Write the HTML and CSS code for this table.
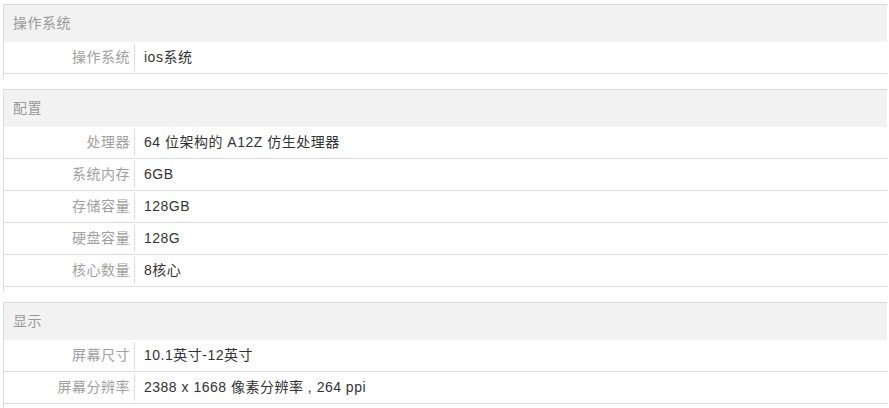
FILE: index.html
```html
<!DOCTYPE html>
<html>
    <head>
        <title>参数</title>
        <link rel="stylesheet" href="styles.css">
    </head>
    <body>
        <div class="spec">
            <div class="spec-head">操作系统</div>
            <div class="spec-row"><div class="spec-label">操作系统</div><div class="spec-value">ios系统</div></div>
        </div>

        <div class="spec">
            <div class="spec-head">配置</div>
            <div class="spec-row"><div class="spec-label">处理器</div><div class="spec-value">64 位架构的 A12Z 仿生处理器</div></div>
            <div class="spec-row"><div class="spec-label">系统内存</div><div class="spec-value">6GB</div></div>
            <div class="spec-row"><div class="spec-label">存储容量</div><div class="spec-value">128GB</div></div>
            <div class="spec-row"><div class="spec-label">硬盘容量</div><div class="spec-value">128G</div></div>
            <div class="spec-row"><div class="spec-label">核心数量</div><div class="spec-value">8核心</div></div>
        </div>

        <div class="spec">
            <div class="spec-head">显示</div>
            <div class="spec-row"><div class="spec-label">屏幕尺寸</div><div class="spec-value">10.1英寸-12英寸</div></div>
            <div class="spec-row"><div class="spec-label">屏幕分辨率</div><div class="spec-value">2388 x 1668 像素分辨率 , 264 ppi</div></div>
        </div>
    </body>
</html>
```

FILE: styles.css
```css
* {
    box-sizing: border-box;
    margin: 0;
    padding: 0;
}

body {
    background: #ffffff;
    padding: 4px 2px 0 3px;
    font-family: 'Liberation Sans', 'Noto Sans CJK SC', sans-serif;
    font-size: 14px;
    letter-spacing: 0.5px;
}

.spec {
    border-top: 1px solid #d9d9d9;
    border-left: 1px solid #dddddd;
    padding-bottom: 5px;
    margin-bottom: 10px;
}

.spec-head {
    height: 37px;
    line-height: 37px;
    padding-left: 9px;
    background: #f2f2f2;
    color: #999999;
}

.spec-row {
    display: flex;
    height: 32px;
    border-bottom: 1px solid #dddddd;
}

.spec-label {
    width: 131px;
    margin: 2px 0;
    padding-right: 4px;
    border-right: 1px solid #dddddd;
    text-align: right;
    line-height: 27px;
    color: #a0a0a0;
}

.spec-value {
    padding-left: 9px;
    line-height: 31px;
    color: #333333;
}
```
